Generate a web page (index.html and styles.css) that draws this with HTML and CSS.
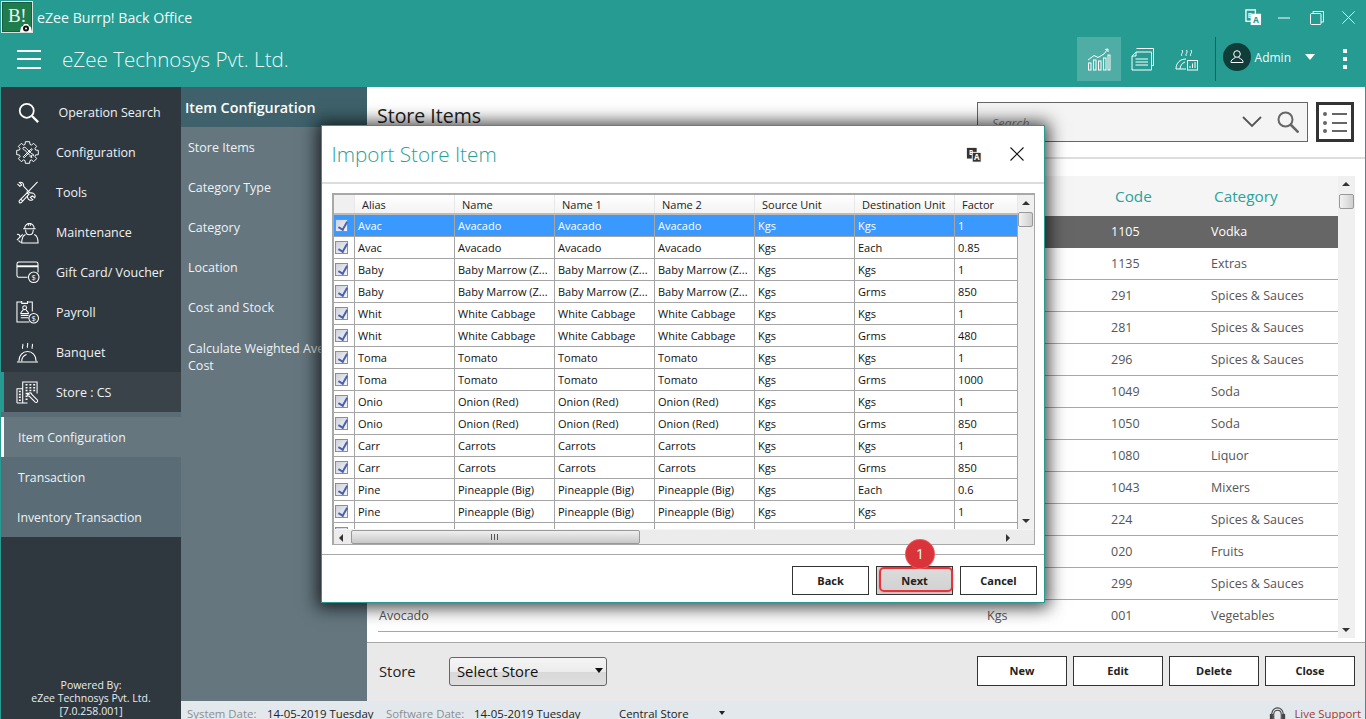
FILE: index.html
```html
<!DOCTYPE html>
<html lang="en">
<head>
<meta charset="utf-8">
<title>eZee Burrp! Back Office</title>
<link rel="stylesheet" href="styles.css">
</head>
<body>
<div class="app">
  <header class="top">
    <div class="titlebar">
      <div class="logo"><span class="logo-text">B!</span>
        <svg class="logo-gear" viewBox="0 0 12 10"><path d="M0 10l1-5 2-1 1-2h4l1 2 2 1 1 5z" fill="#fff"/><circle cx="6" cy="6.500" r="3" fill="#111"/><circle cx="6" cy="6.500" r="1" fill="#fff"/></svg>
      </div>
      <span class="app-name">eZee Burrp! Back Office</span>
      <div class="winctl">
        <svg class="ic-tr" viewBox="0 0 18 18"><rect x="1" y="1" width="10" height="12" fill="none" stroke="#fff" stroke-width="1.4"/><rect x="6" y="5" width="11" height="12" fill="#fff"/><text x="11.5" y="15" class="tr-a" fill="#259b92">A</text><text x="3" y="9" class="tr-b" fill="#fff">B</text></svg>
        <svg class="ic-min" viewBox="0 0 12 12"><path d="M0 6h12" stroke="#fff"/></svg>
        <svg class="ic-rest" viewBox="0 0 14 14"><rect x=".5" y="2.5" width="10.5" height="11" rx="1" fill="none" stroke="#fff"/><path d="M3 2.5V.5h10.5v10.5H11" fill="none" stroke="#fff"/></svg>
        <svg class="ic-close" viewBox="0 0 13 13"><path d="M.5.5l12 12M12.5.5l-12 12" stroke="#fff"/></svg>
      </div>
    </div>
    <div class="toolbar">
      <div class="burger"><i></i><i></i><i></i></div>
      <span class="company">eZee Technosys Pvt. Ltd.</span>
      <div class="tools">
        <div class="tool active">
          <svg viewBox="0 0 24 24" fill="none" stroke="#fff"><path d="M1 13l6-4.5 4 2 6-3.500 3.500-4.500M18 2.500l3-.5v3"/><rect x="1.500" y="16" width="2.500" height="7"/><rect x="6.500" y="13" width="2.500" height="10"/><rect x="11.500" y="14" width="2.500" height="9"/><rect x="16.500" y="11" width="2.500" height="12"/><rect x="21" y="8" width="2" height="15"/></svg>
        </div>
        <div class="tool">
          <svg viewBox="0 0 24 24" fill="none" stroke="#fff"><path d="M5.500 1.500h17v17h-2"/><path d="M5 5h15.500v18H1V9z"/><path d="M5 5v4H1M4.500 12h12.500M4.500 15h12.500M4.500 18h12.500"/></svg>
        </div>
        <div class="tool">
          <svg viewBox="0 0 24 24" fill="none" stroke="#fff"><path d="M7 9c-2-2 2-3 0-6M11.500 9c-2-2 2-3 0-6M16 9c-2-2 2-3 0-6"/><path d="M1 22c0-6 4-10 10-10M1 22h10M5 22c0-3 2-6 5-7"/><rect x="12.500" y="13.500" width="10" height="9.500"/><path d="M15 21v-2M17.500 21v-4.500M20 21v-6"/></svg>
        </div>
        <span class="tool-div"></span>
        <div class="user">
          <span class="avatar"><svg viewBox="0 0 16 16" fill="none" stroke="#fff"><circle cx="8" cy="5" r="3.300"/><path d="M6.500 8c0 1.500-4.500 2-4.500 4.500v1h12v-1c0-2.500-4.500-3-4.500-4.500"/></svg></span>
          <span class="user-name">Admin</span>
          <span class="caret"></span>
        </div>
        <div class="kebab"><i></i><i></i><i></i></div>
      </div>
    </div>
  </header>

  <div class="main">
    <aside class="side">
      <nav class="side-nav">
        <div class="nav-item op">
          <svg viewBox="0 0 24 24" fill="none" stroke="#fff" stroke-width="2"><circle cx="10" cy="10" r="8"/><path d="M16 16l7 7" stroke-width="2.600"/></svg>
          <span>Operation Search</span>
        </div>
        <div class="nav-item">
          <svg viewBox="0 0 24 24" fill="none" stroke="#fff" stroke-width="1"><path d="M20.42 9.43L23.29 9.81V14.19L20.42 14.57L19.77 16.13L21.53 18.43L18.43 21.53L16.13 19.77L14.57 20.42L14.19 23.29H9.81L9.43 20.42L7.87 19.77L5.57 21.53L2.47 18.43L4.23 16.13L3.58 14.57L.71 14.19V9.81L3.58 9.43L4.23 7.87L2.47 5.57L5.57 2.47L7.87 4.23L9.43 3.58L9.81 .71H14.19L14.57 3.58L16.13 4.23L18.43 2.47L21.53 5.57L19.77 7.87z"/><path d="M7.500 7c1-1 2.500-.5 3 .5l6 6c1.200-.3 2.300.7 1.800 2l-1.300-1-1.200 1.200 1 1.300c-1.500.5-2.500-.5-2-1.800l-6-6C7.500 9.500 7 8 7.500 7z"/><path d="M7.500 16.500l8-8 1-.5.5.5-.5 1-8 8z"/></svg>
          <span>Configuration</span>
        </div>
        <div class="nav-item">
          <svg viewBox="0 0 24 24" fill="none" stroke="#fff" stroke-width="1.100"><path d="M22.500 1l-11 11.500M11 11l2 2"/><path d="M11.500 12.500l-8 8c-1 1.500.5 3 2 2l8-8.500z"/><path d="M5 19l2 2"/><path d="M1.500 3l2.500 2.500L6 4 3.500 1.500C6 .5 8.500 2.500 8 5.500l6.500 7C17 12 20 13 20 16l-.5 1.500L17 15.500l-2 1.500 2.500 2.500-1.500.5c-2.500.5-4.500-2-4-4.500"/></svg>
          <span>Tools</span>
        </div>
        <div class="nav-item">
          <svg viewBox="0 0 24 24" fill="none" stroke="#fff" stroke-width="1.100"><path d="M9 8c0-7 10-7 10 0M7.500 8h13M10 9c0 7 8 7 8 0M13 2v3M15 2v3"/><path d="M10 14c-3 1-4 4-4 9h17c0-5-1-8-4-9"/><path d="M1 20l6-6M1 14c2-.5 3.500 1 3 3M6 22c-1.500.5-3-.5-3-2"/></svg>
          <span>Maintenance</span>
        </div>
        <div class="nav-item">
          <svg viewBox="0 0 24 24" fill="none" stroke="#fff" stroke-width="1.100"><path d="M12 17H3a2 2 0 0 1-2-2V3a2 2 0 0 1 2-2h18a2 2 0 0 1 2 2v9"/><path d="M1 5.500h22" stroke-width="2"/><circle cx="18.500" cy="17" r="5.500" fill="#30383f"/><text x="18.500" y="20.200" class="dollar" fill="#fff" stroke="none">$</text></svg>
          <span>Gift Card/ Voucher</span>
        </div>
        <div class="nav-item">
          <svg viewBox="0 0 24 24" fill="none" stroke="#fff" stroke-width="1.100"><path d="M14 22H1V1h5M12 1h5v10"/><path d="M6 0v2.500h6V0"/><circle cx="9" cy="7" r="2"/><path d="M7.500 9c-.5 2-2.500 2-2.500 4h8c0-2-2-2-2.500-4M5 15h8M5 17.500h8"/><circle cx="18.500" cy="18" r="5" fill="#30383f"/><text x="18.500" y="21" class="dollar" fill="#fff" stroke="none">$</text></svg>
          <span>Payroll</span>
        </div>
        <div class="nav-item">
          <svg viewBox="0 0 24 24" fill="none" stroke="#fff" stroke-width="1.100"><path d="M7 8C6 6 8 5 7 3M12 7c-1-2 1-3 0-5M17 8c-1-2 1-3 0-5"/><path d="M3 21c0-6 4-10 9-10s9 4 9 10M1 22h22M6 21c0-3 2-6 5-7"/></svg>
          <span>Banquet</span>
        </div>
        <div class="nav-item store">
          <svg viewBox="0 0 24 24" fill="none" stroke="#fff" stroke-width="1.100"><path d="M1 23V8h6M7 23V1h15v12M1 23h11"/><path d="M10 4h2M14 4h2M18 4h2M10 7h2M14 7h2M18 7h2M10 10h2M14 10h2M18 10h2M3 11h2M3 14h2M3 17h2M3 20h2M10 13h2M10 16h2M10 19h2" stroke-width="1.600"/><path d="M13 13c1-1 3-1 3.500 1l6 6c.5 1.500-1 3-2.500 2l-6-6c-1.500 0-2.500-1.500-2-3l2 1.500z" fill="#3a424a"/></svg>
          <span>Store : CS</span>
        </div>
      </nav>
      <div class="sub-nav">
        <div class="sub-item current">Item Configuration</div>
        <div class="sub-item">Transaction</div>
        <div class="sub-item">Inventory Transaction</div>
      </div>
      <div class="powered">Powered By:<br>eZee Technosys Pvt. Ltd.<br>[7.0.258.001]</div>
    </aside>

    <div class="right">
      <div class="work">
        <section class="submenu">
          <h2 class="submenu-head">Item Configuration</h2>
          <ul class="submenu-list">
            <li>Store Items</li>
            <li>Category Type</li>
            <li>Category</li>
            <li>Location</li>
            <li>Cost and Stock</li>
            <li class="two">Calculate Weighted Average<br>Cost</li>
          </ul>
        </section>
        <section class="content">
          <div class="content-head">
            <h1 class="page-title">Store Items</h1>
            <div class="search">
              <span class="search-ph">Search</span>
              <svg class="chev" viewBox="0 0 20 12"><path d="M1 1l9 9 9-9" fill="none" stroke="#555" stroke-width="1.800"/></svg>
              <svg class="search-ic" viewBox="0 0 22 22" fill="none" stroke="#666" stroke-width="2"><circle cx="8.500" cy="8.500" r="7"/><path d="M13.500 13.500l8 8" stroke-width="2.500"/></svg>
            </div>
            <div class="listbtn"><i></i><i></i><i></i></div>
          </div>
          <div class="table-wrap">
            <div class="table">
              <div class="t-head"><span></span><span></span><span>Code</span><span>Category</span></div>
              <div class="t-row sel"><span></span><span></span><span>1105</span><span>Vodka</span></div>
              <div class="t-row"><span></span><span></span><span>1135</span><span>Extras</span></div>
              <div class="t-row"><span></span><span></span><span>291</span><span>Spices &amp; Sauces</span></div>
              <div class="t-row"><span></span><span></span><span>281</span><span>Spices &amp; Sauces</span></div>
              <div class="t-row"><span></span><span></span><span>296</span><span>Spices &amp; Sauces</span></div>
              <div class="t-row"><span></span><span></span><span>1049</span><span>Soda</span></div>
              <div class="t-row"><span></span><span></span><span>1050</span><span>Soda</span></div>
              <div class="t-row"><span></span><span></span><span>1080</span><span>Liquor</span></div>
              <div class="t-row"><span></span><span></span><span>1043</span><span>Mixers</span></div>
              <div class="t-row"><span></span><span></span><span>224</span><span>Spices &amp; Sauces</span></div>
              <div class="t-row"><span></span><span></span><span>020</span><span>Fruits</span></div>
              <div class="t-row"><span></span><span></span><span>299</span><span>Spices &amp; Sauces</span></div>
              <div class="t-row"><span>Avocado</span><span>Kgs</span><span>001</span><span>Vegetables</span></div>
            </div>
            <div class="vbar big">
              <span class="arr up"></span><span class="thumb"></span><span class="arr down"></span>
            </div>
          </div>
          <div class="content-foot">
            <span class="store-label">Store</span>
            <div class="select">Select Store<span class="sel-arrow"></span></div>
            <div class="foot-btns">
              <button class="btn">New</button>
              <button class="btn">Edit</button>
              <button class="btn">Delete</button>
              <button class="btn">Close</button>
            </div>
          </div>
        </section>
      </div>
      <footer class="status">
        <span class="st-l st-a">System Date:</span>
        <span class="st-v st-b">14-05-2019 Tuesday</span>
        <span class="st-l st-c">Software Date:</span>
        <span class="st-v st-d">14-05-2019 Tuesday</span>
        <span class="st-v st-e">Central Store</span>
        <span class="st-arrow"></span>
        <span class="st-support">
          <svg viewBox="0 0 18 18" fill="none" stroke="#444" stroke-width="1.200"><path d="M3 11V8a6 6 0 0 1 12 0v3"/><path d="M5 9c0-6 8-6 8 0v4c0 3-8 3-8 0z"/><rect x="1.500" y="9" width="2" height="5" fill="#444"/><rect x="14.500" y="9" width="2" height="5" fill="#444"/></svg>
          <span class="live">Live Support</span>
        </span>
      </footer>
    </div>
  </div>

  <div class="modal">
    <div class="modal-head">
      <h3 class="modal-title">Import Store Item</h3>
      <svg class="modal-tr" viewBox="0 0 18 18"><rect x="1" y="1" width="11" height="12" fill="#333"/><text x="3.500" y="9.500" class="tr-b" fill="#fff">B</text><rect x="7" y="6" width="10" height="11" fill="#333" stroke="#fff"/><text x="12" y="15" class="tr-a" fill="#fff">A</text></svg>
      <svg class="modal-x" viewBox="0 0 14 14"><path d="M.5.500l13 13M13.500.500l-13 13" stroke="#111" stroke-width="1.100"/></svg>
    </div>
    <div class="grid">
      <div class="grid-main">
        <div class="g-head"><span></span><span>Alias</span><span>Name</span><span>Name 1</span><span>Name 2</span><span>Source Unit</span><span>Destination Unit</span><span>Factor</span></div>
        <div class="g-row sel"><span><b class="ck"></b></span><span>Avac</span><span>Avacado</span><span>Avacado</span><span>Avacado</span><span>Kgs</span><span>Kgs</span><span>1</span></div>
        <div class="g-row"><span><b class="ck"></b></span><span>Avac</span><span>Avacado</span><span>Avacado</span><span>Avacado</span><span>Kgs</span><span>Each</span><span>0.85</span></div>
        <div class="g-row"><span><b class="ck"></b></span><span>Baby</span><span>Baby Marrow (Z...</span><span>Baby Marrow (Z...</span><span>Baby Marrow (Z...</span><span>Kgs</span><span>Kgs</span><span>1</span></div>
        <div class="g-row"><span><b class="ck"></b></span><span>Baby</span><span>Baby Marrow (Z...</span><span>Baby Marrow (Z...</span><span>Baby Marrow (Z...</span><span>Kgs</span><span>Grms</span><span>850</span></div>
        <div class="g-row"><span><b class="ck"></b></span><span>Whit</span><span>White Cabbage</span><span>White Cabbage</span><span>White Cabbage</span><span>Kgs</span><span>Kgs</span><span>1</span></div>
        <div class="g-row"><span><b class="ck"></b></span><span>Whit</span><span>White Cabbage</span><span>White Cabbage</span><span>White Cabbage</span><span>Kgs</span><span>Grms</span><span>480</span></div>
        <div class="g-row"><span><b class="ck"></b></span><span>Toma</span><span>Tomato</span><span>Tomato</span><span>Tomato</span><span>Kgs</span><span>Kgs</span><span>1</span></div>
        <div class="g-row"><span><b class="ck"></b></span><span>Toma</span><span>Tomato</span><span>Tomato</span><span>Tomato</span><span>Kgs</span><span>Grms</span><span>1000</span></div>
        <div class="g-row"><span><b class="ck"></b></span><span>Onio</span><span>Onion (Red)</span><span>Onion (Red)</span><span>Onion (Red)</span><span>Kgs</span><span>Kgs</span><span>1</span></div>
        <div class="g-row"><span><b class="ck"></b></span><span>Onio</span><span>Onion (Red)</span><span>Onion (Red)</span><span>Onion (Red)</span><span>Kgs</span><span>Grms</span><span>850</span></div>
        <div class="g-row"><span><b class="ck"></b></span><span>Carr</span><span>Carrots</span><span>Carrots</span><span>Carrots</span><span>Kgs</span><span>Kgs</span><span>1</span></div>
        <div class="g-row"><span><b class="ck"></b></span><span>Carr</span><span>Carrots</span><span>Carrots</span><span>Carrots</span><span>Kgs</span><span>Grms</span><span>850</span></div>
        <div class="g-row"><span><b class="ck"></b></span><span>Pine</span><span>Pineapple (Big)</span><span>Pineapple (Big)</span><span>Pineapple (Big)</span><span>Kgs</span><span>Each</span><span>0.6</span></div>
        <div class="g-row"><span><b class="ck"></b></span><span>Pine</span><span>Pineapple (Big)</span><span>Pineapple (Big)</span><span>Pineapple (Big)</span><span>Kgs</span><span>Kgs</span><span>1</span></div>
        <div class="g-row"><span><b class="ck"></b></span><span></span><span></span><span></span><span></span><span></span><span></span><span></span></div>
      </div>
      <div class="vbar small">
        <span class="arr up"></span><span class="thumb"></span><span class="arr down"></span>
      </div>
      <div class="hbar">
        <span class="arr left"></span>
        <span class="hthumb"><i></i></span>
        <span class="arr rightarr"></span>
      </div>
    </div>
    <div class="modal-foot">
      <button class="btn mbtn">Back</button>
      <button class="btn mbtn next">Next<span class="badge">1</span></button>
      <button class="btn mbtn">Cancel</button>
    </div>
  </div>
</div>
</body>
</html>
```
FILE: styles.css
```css
* { box-sizing: border-box; }
html, body { margin: 0; padding: 0; height: 100%; overflow: hidden; }
body { font-family: "Open Sans", "Noto Sans", sans-serif; font-size: 12.5px; color: #333; }
h1, h2, h3, ul { margin: 0; padding: 0; font-weight: normal; }
li { list-style: none; }
svg { display: block; }

.app { position: relative; width: 1366px; height: 719px; display: flex; flex-direction: column; background: #259b92; }

/* header */
.top { height: 87px; color: #fff; flex: none; }
.titlebar { height: 35px; display: flex; align-items: center; padding-left: 1px; }
.logo { position: relative; width: 32px; height: 32px; margin-top: -1px; border: 1px solid #d5e5de; outline: 1px solid #1c5a45; outline-offset: -2px; background: #1f7c4d; }
.logo-text { display: block; font-family: "Liberation Serif", serif; font-size: 19px; line-height: 27px; text-align: center; color: #eaf5ee; letter-spacing: -.5px; margin-right: 0; }
.logo-gear { position: absolute; right: 0; bottom: 0; width: 12px; height: 10px; }
.app-name { margin-left: 4px; font-size: 14.2px; color: #f0fafa; }
.winctl { margin-left: auto; display: flex; align-items: center; height: 32px; padding-right: 11px; }
.ic-tr { width: 17px; height: 17px; margin-right: 16px; }
.tr-a { font: bold 9px "Open Sans", sans-serif; text-anchor: middle; }
.tr-b { font: bold 7px "Open Sans", sans-serif; }
.ic-min { width: 12px; height: 12px; margin-right: 20px; }
.ic-rest { width: 14px; height: 14px; margin-right: 18px; }
.ic-close { width: 13px; height: 13px; }

.toolbar { height: 52px; display: flex; align-items: center; padding: 0 0 4px 17px; }
.burger { width: 24px; height: 19px; display: flex; flex-direction: column; justify-content: space-between; }
.burger i { display: block; height: 2px; background: #fff; }
.company { margin-left: 21px; font-size: 20.6px; color: #eaf7f6; font-weight: 300; }
.tools { margin-left: auto; display: flex; align-items: center; height: 44px; }
.tool { width: 44px; height: 44px; display: flex; align-items: center; justify-content: center; }
.tool svg { width: 24px; height: 24px; }
.tool.active { background: #50ada6; }
.tool-div { width: 1px; height: 44px; background: #17625e; margin-left: 6px; }
.user { display: flex; align-items: center; margin-left: 7px; margin-top: -4px; }
.avatar { width: 28px; height: 28px; border-radius: 50%; background: #0f3d3a; display: flex; align-items: center; justify-content: center; }
.avatar svg { width: 16px; height: 16px; }
.user-name { margin-left: 4px; font-size: 12px; color: #f2fbfa; }
.caret { width: 0; height: 0; margin-left: 14px; border: 5px solid transparent; border-top: 6px solid #fff; border-bottom: 0; }
.kebab { margin-left: 28px; margin-right: 19px; width: 4px; height: 20px; display: flex; flex-direction: column; justify-content: space-between; }
.kebab i { display: block; height: 4px; background: #fff; }

/* main */
.main { flex: 1; display: flex; min-height: 0; border-right: 1px solid #259b92; }
.side { width: 181px; flex: none; display: flex; flex-direction: column; background: #30383f; border-left: 1px solid #259b92; color: #eef2f4; }
.side-nav { padding-top: 5px; }
.nav-item { height: 40px; display: flex; align-items: center; padding-left: 15px; }
.nav-item svg { width: 23px; height: 23px; flex: none; overflow: visible; }
.nav-item span { margin-left: 17px; }
.dollar { font: 8px "Open Sans", sans-serif; text-anchor: middle; }
.nav-item.op { padding-left: 17px; }
.nav-item.op svg { width: 21px; height: 21px; }
.nav-item.op span { margin-left: 19.5px; }
.nav-item.store { background: #3a424a; border-left: 3px solid #259b92; padding-left: 12px; }
.sub-nav { background: #5a6d77; padding-top: 5px; }
.sub-item { height: 40px; line-height: 42px; padding-left: 17px; font-size: 12.3px; }
.sub-item:last-child { padding-left: 16px; }
.sub-item.current { background: #65767f; border-left: 3px solid #fff; padding-left: 14px; }
.powered { margin-top: auto; padding-bottom: 1px; text-align: center; font-size: 10.5px; line-height: 13px; color: #e8ecef; }

.right { flex: 1; min-width: 0; display: flex; flex-direction: column; }
.work { flex: 1; display: flex; min-height: 0; }

.submenu { width: 186px; flex: none; background: #65767f; color: #eef2f4; overflow: hidden; }
.submenu-head { height: 40px; line-height: 42px; padding-left: 4px; background: #3e616b; color: #fff; font-size: 14.3px; font-weight: 600; }
.submenu-list li { height: 40px; line-height: 42px; padding-left: 7px; white-space: nowrap; }
.submenu-list li.two { height: 60px; line-height: 17px; padding-top: 13px; }

.content { flex: 1; min-width: 0; display: flex; flex-direction: column; background: #fff; }
.content-head { height: 72px; flex: none; display: flex; border-bottom: 2px solid #ddd; padding: 15px 11px 0 10px; }
.page-title { font-size: 19.5px; line-height: 28px; color: #222; }
.search { position: relative; width: 331px; height: 40px; margin-left: auto; background: #f4f4f4; border: 1px solid #666; display: flex; align-items: center; }
.search-ph { margin-left: 14px; font-style: italic; color: #888; font-size: 12.5px; padding-top: 2px; }
.chev { width: 20px; height: 12px; margin-left: auto; }
.search-ic { width: 22px; height: 22px; margin: 0 8px 0 15px; }
.listbtn { width: 38px; height: 40px; margin-left: 8px; border: 3px solid #333; padding: 8px 4px 7px 5px; display: flex; flex-direction: column; justify-content: space-between; background: #fff; }
.listbtn i { position: relative; display: block; height: 2px; margin-left: 8px; background: #666; }
.listbtn i::before { content: ""; position: absolute; left: -9px; top: -1px; width: 4px; height: 4px; border-radius: 50%; background: #666; }

.table-wrap { flex: 1; min-height: 0; display: flex; padding: 17px 10px 4px 11px; }
.table { flex: 1; min-width: 0; }
.t-head, .t-row { display: grid; grid-template-columns: 608px 124px 100px 128px; align-items: center; }
.t-head { height: 40px; background: #f5f5f5; color: #2aa39c; font-size: 15.3px; }
.t-head span:nth-child(3) { padding-left: 5px; }
.t-head span:nth-child(4) { padding-left: 4px; }
.t-row { height: 32px; border-bottom: 1px solid #a8a8a8; font-size: 12.5px; color: #555; }
.t-row span { padding-left: 1px; white-space: nowrap; }
.t-row.sel { background: #666; color: #fff; border-bottom-color: #666; }

.vbar { position: relative; flex: none; background: #f0f0f0; }
.vbar.big { width: 17px; }
.arr { position: absolute; width: 0; height: 0; }
.arr.up { top: 6px; left: 4px; border: 4px solid transparent; border-bottom: 4px solid #333; border-top: 0; }
.arr.down { bottom: 6px; left: 4px; border: 4px solid transparent; border-top: 4px solid #333; border-bottom: 0; }
.thumb { position: absolute; top: 18px; left: 1px; width: 15px; height: 15px; border: 1px solid #999; border-radius: 2px; background: linear-gradient(90deg, #f2f2f2, #cfcfcf); }

.content-foot { height: 59px; flex: none; display: flex; align-items: center; background: #e9e9e9; border-top: 1px solid #a8a8a8; padding: 0 10px 3px 12px; }
.store-label { font-size: 14.8px; color: #222; width: 70px; }
.select { position: relative; width: 158px; height: 29px; margin-top: 2px; line-height: 27px; padding-left: 7px; border: 1px solid #666; border-radius: 3px; font-size: 14.8px; color: #111; background: linear-gradient(#f5f5f5 0%, #ececec 50%, #d8d8d8 51%, #dedede 100%); }
.sel-arrow { position: absolute; right: 3px; top: 10px; border: 4px solid transparent; border-top: 5px solid #111; border-bottom: 0; }
.foot-btns { margin-left: auto; display: flex; gap: 6px; }
.btn { width: 90px; height: 30px; padding: 0; border: 1px solid #333; background: #fff; font-family: "Open Sans", sans-serif; font-size: 11px; font-weight: 700; color: #222; }

.status { height: 18px; flex: none; position: relative; display: flex; align-items: center; background: #e3e8ec; font-size: 11.4px; line-height: 13px; white-space: nowrap; padding-top: 6px; }
.st-l { color: #8a8f93; }
.st-v { color: #222; }
.st-a { margin-left: 6px; width: 80px; }
.st-b { width: 119px; }
.st-c { width: 88px; }
.st-d { width: 145px; }
.st-e { width: 100px; }
.st-arrow { border: 3px solid transparent; border-top: 4px solid #222; border-bottom: 0; }
.st-support { margin-left: auto; display: flex; align-items: center; margin-right: 4px; gap: 8px; }
.st-support svg { width: 17px; height: 17px; margin-top: 2px; }
.live { color: #a5392a; }

/* modal */
.modal { position: absolute; left: 321px; top: 125px; width: 724px; height: 478px; background: #fff; border: 1px solid #259b92; box-shadow: 0 1px 16px 4px rgba(0,0,0,.72); display: flex; flex-direction: column; z-index: 5; }
.modal-head { height: 58px; flex: none; display: flex; align-items: center; border-bottom: 2px solid #ddd; padding: 0 20px 0 9.5px; }
.modal-title { font-size: 20.7px; color: #2c9e97; font-weight: 300; }
.modal-tr { width: 16px; height: 16px; margin-left: auto; margin-top: 1px; }
.modal-x { width: 14px; height: 14px; margin-left: 28px; }

.grid { position: relative; width: 703px; height: 352px; margin: 9px 0 0 10px; flex: none; display: grid; grid-template-columns: 684px 16px; grid-template-rows: 334px 15px; border: 1px solid #a8a8a8; border-top-width: 2px; border-left-width: 2px; overflow: hidden; }
.grid-main { overflow: hidden; }
.g-head, .g-row { display: grid; grid-template-columns: 21px repeat(6, 100px) 63px; font-size: 11px; color: #111; }
.g-head { height: 20px; align-items: center; background: linear-gradient(#fff, #f3f3f3); border-bottom: 2px solid #bbb; color: #222; }
.g-head span { height: 18px; line-height: 19px; padding-left: 7px; border-right: 1px solid #e8e8e8; }
.g-head span:first-child { background: #f0f0f0; }
.g-row { height: 22px; border-bottom: 1px solid #a5a5a5; }
.g-row span { line-height: 21px; padding-left: 3px; white-space: nowrap; overflow: hidden; border-right: 1px solid #a5a5a5; }
.g-row span:first-child { padding-left: 1px; }
.g-row.sel { background: #3a99ff; color: #fff; }
.ck { position: relative; display: block; width: 13px; height: 13px; margin-top: 4px; border: 1px solid #8a8f9c; background: linear-gradient(135deg, #cfd2dc, #f4f4f8); }
.ck::after { content: ""; position: absolute; left: 3.5px; top: 0; width: 3.5px; height: 8px; border: solid #4a62b0; border-width: 0 2px 2px 0; transform: rotate(30deg); }

.vbar.small { background: #f0f0f0; }
.vbar.small .thumb { top: 17px; left: 0; }
.hbar { grid-column: 1 / 3; position: relative; background: #ececec; border-top: 1px solid #f5f5f5; }
.arr.left { left: 5px; top: 4px; border: 4px solid transparent; border-right: 4px solid #333; border-left: 0; }
.arr.rightarr { right: 24px; top: 4px; border: 4px solid transparent; border-left: 4px solid #333; border-right: 0; }
.hthumb { position: absolute; left: 17px; top: 0; width: 289px; height: 14px; border: 1px solid #999; border-radius: 2px; background: linear-gradient(#efefef, #c8c8c8); }
.hthumb i { position: absolute; left: 139px; top: 3px; width: 7px; height: 6px; background: repeating-linear-gradient(90deg, #555 0 1px, transparent 1px 3px); }

.modal-foot { margin-top: 9px; flex: 1; display: flex; justify-content: flex-end; gap: 7px; border-top: 1px solid #a8a8a8; padding: 11px 7px 0 0; }
.mbtn { width: 77px; height: 29px; }
.next { position: relative; background: linear-gradient(#dcdcdc, #d0d0d0); }
.next::after { content: ""; position: absolute; left: 2px; top: 0; right: -1px; bottom: 2px; border: 2px solid #e8333a; border-radius: 5px; box-shadow: 0 0 2px rgba(232,51,58,.5); }
.badge { position: absolute; left: 29px; top: -27px; width: 28px; height: 28px; line-height: 27px; border-radius: 50%; background: #d8343a; box-shadow: 0 0 0 1px #ea5a5e; color: #fff; font-size: 14px; font-weight: 400; text-align: center; z-index: 2; }
```
